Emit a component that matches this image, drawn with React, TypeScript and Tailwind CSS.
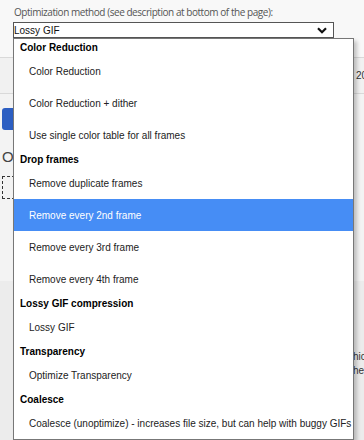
import React from "react";

type Group = { label: string; options: string[] };

const groups: Group[] = [
  {
    label: "Color Reduction",
    options: ["Color Reduction", "Color Reduction + dither", "Use single color table for all frames"],
  },
  {
    label: "Drop frames",
    options: [
      "Remove duplicate frames",
      "Remove every 2nd frame",
      "Remove every 3rd frame",
      "Remove every 4th frame",
    ],
  },
  { label: "Lossy GIF compression", options: ["Lossy GIF"] },
  { label: "Transparency", options: ["Optimize Transparency"] },
  {
    label: "Coalesce",
    options: ["Coalesce (unoptimize) - increases file size, but can help with buggy GIFs"],
  },
];

const highlighted = "Remove every 2nd frame";

const Chevron = () => (
  <svg width="10" height="7" viewBox="0 0 10 7" className="mr-[6px]">
    <polyline points="1,1.2 5,5.2 9,1.2" fill="none" stroke="#111" strokeWidth="2.2" />
  </svg>
);

const Dropdown = () => (
  <div className="absolute left-0 top-full z-10 w-[341px] h-[402px] border border-[#777] bg-white shadow-[3px_3px_4px_rgba(0,0,0,0.22)] overflow-hidden">
    {groups.map((group) => (
      <div key={group.label}>
        <div className="h-[16px] flex items-center pt-[2px] pl-[6px] text-[10px] font-bold text-black leading-none">
          {group.label}
        </div>
        {group.options.map((opt) => (
          <div
            key={opt}
            className={`h-[32px] flex items-center pt-px pl-[15px] text-[10px] leading-none whitespace-nowrap ${
              opt === highlighted ? "bg-[#468df5] text-white" : "text-[#222]"
            }`}
          >
            {opt}
          </div>
        ))}
      </div>
    ))}
  </div>
);

export default function App() {
  return (
    <div className="relative w-[364px] h-[440px] overflow-hidden bg-[#f3f3f3] font-['Liberation_Sans',Arial,sans-serif]">
      {/* top: label + select */}
      <div className="h-[57px] bg-[#f8f8f8] pl-[13px] pt-[6px]">
        <p className="pl-px text-[10px] leading-[13px] tracking-[-0.45px] text-[#555] font-['Open_Sans',sans-serif]">
          Optimization method (see description at bottom of the page):
        </p>
        <div className="relative mt-[3px] w-[321px]">
          <div className="h-[16px] border border-[#555] bg-white flex items-center justify-between">
            <span className="pt-px text-[10px] leading-none text-[#111]">Lossy GIF</span>
            <Chevron />
          </div>
          <Dropdown />
        </div>
      </div>

      {/* content behind the open list */}
      <div className="h-[37px] border-y border-[#d9d9d9] bg-[#f1f1f1] flex items-center">
        <span className="ml-[356px] text-[10px] text-[#333]">200</span>
      </div>
      <div className="pl-[2px] pt-[14px]">
        <div className="w-[90px] h-[22px] rounded-[3px] bg-[#2c5ec2]" />
        <div className="mt-[18px] text-[15px] leading-[18px] text-[#444]">Or drop file</div>
        <div className="mt-[10px] w-[300px] h-[23px] border border-dashed border-[#333]" />
      </div>
      <div className="mt-[82px] h-[160px] bg-[#ececec] pt-[69px] text-[10px] leading-[14px] text-[#333]">
        <p className="ml-[353px] whitespace-nowrap">hich</p>
        <p className="ml-[353px] whitespace-nowrap">he</p>
      </div>
    </div>
  );
}
